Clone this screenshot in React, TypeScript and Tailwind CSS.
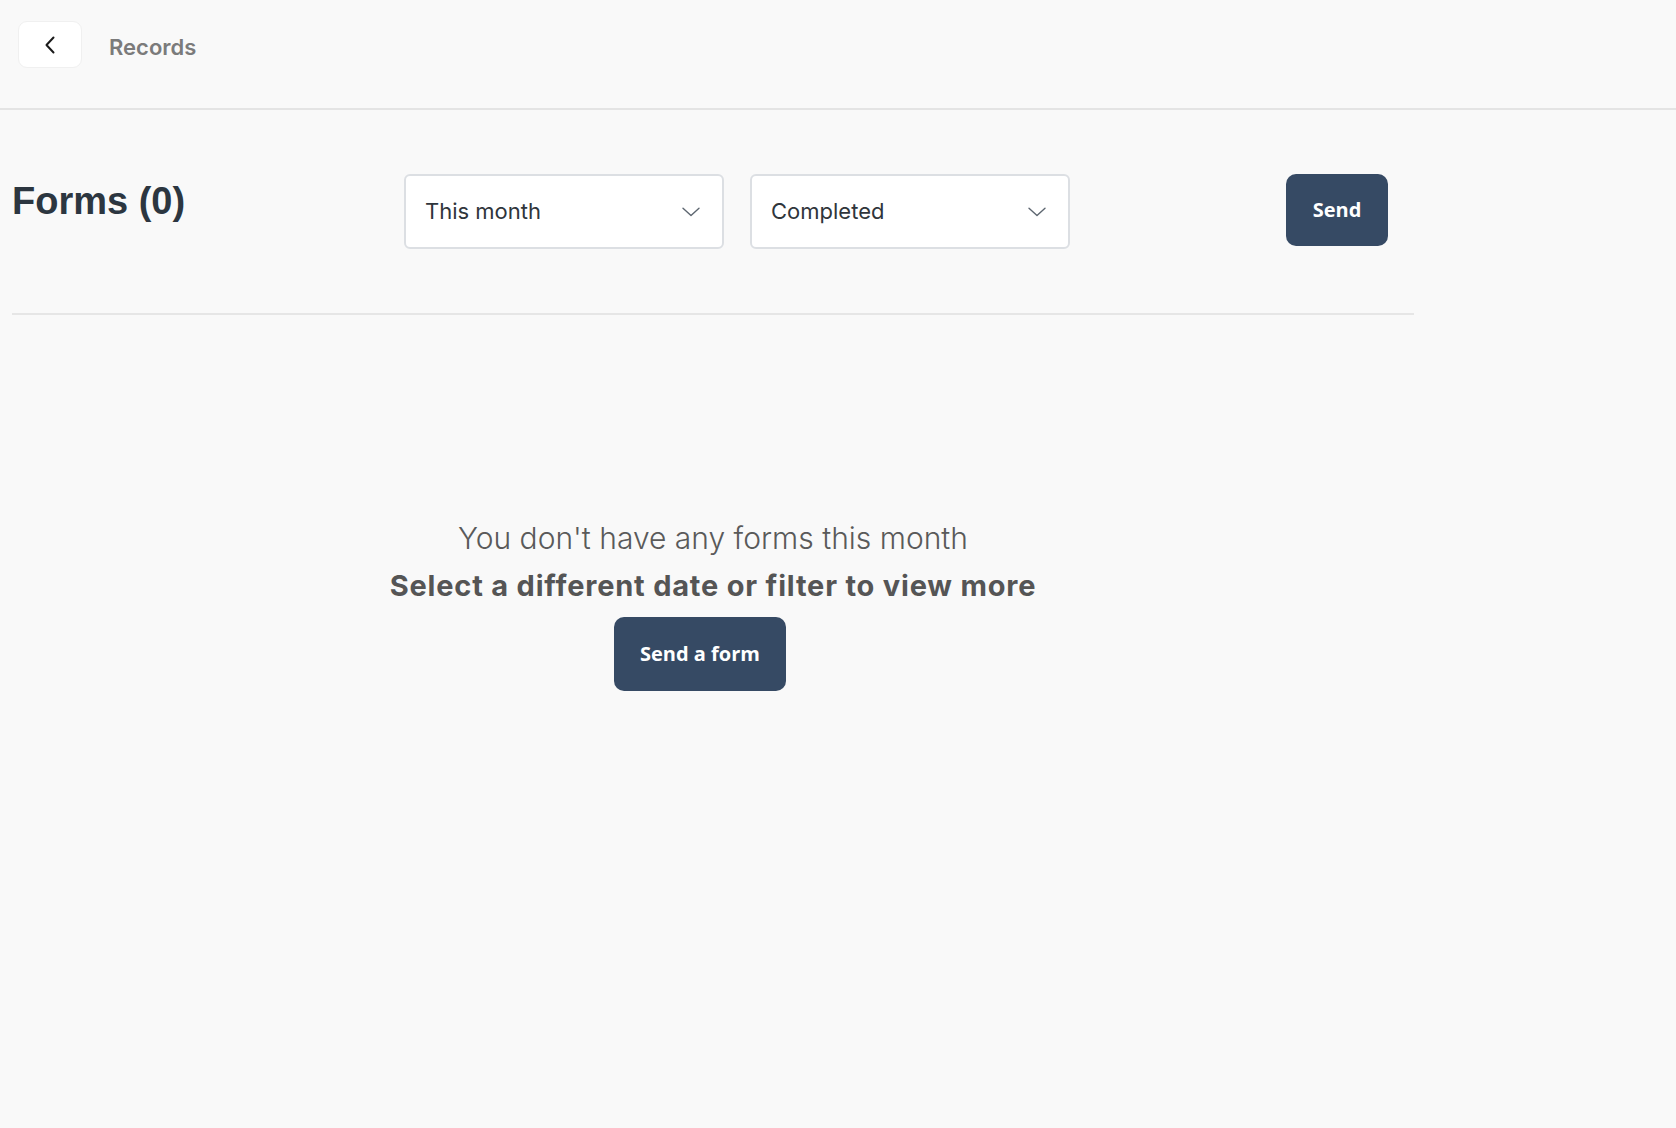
import React from "react";

function Chevron() {
  return (
    <svg width="18" height="10" viewBox="0 0 18 10" fill="none">
      <path d="M1 1.2 L9 8.6 L17 1.2" stroke="#5d6670" strokeWidth="1.4" strokeLinecap="round" strokeLinejoin="round" />
    </svg>
  );
}

function Select({ label }: { label: string }) {
  return (
    <div className="flex h-[75px] w-[320px] items-center justify-between rounded-[6px] border-2 border-[#dcdfe3] bg-white pl-[19px] pr-[22px]">
      <span className="text-[22px] text-[#2f353b]" style={{ fontFamily: "Inter, sans-serif" }}>
        {label}
      </span>
      <Chevron />
    </div>
  );
}

export default function App() {
  return (
    <div className="min-h-[1128px] w-full bg-[#f9f9f9]">
      <header className="flex h-[110px] items-start border-b-2 border-[#e4e4e4] pl-[18px] pt-[21px]">
        <button className="flex h-[47px] w-[64px] items-center justify-center rounded-[9px] border border-[#f0f0f0] bg-white">
          <svg width="12" height="18" viewBox="0 0 12 18" fill="none">
            <path d="M9.5 1.5 L2.5 9 L9.5 16.5" stroke="#1a1a1a" strokeWidth="2" strokeLinecap="round" strokeLinejoin="round" />
          </svg>
        </button>
        <span
          className="ml-[27px] mt-[10px] text-[22px] font-semibold text-[#7b7b7b]"
          style={{ fontFamily: "Inter, sans-serif" }}
        >
          Records
        </span>
      </header>

      <main className="w-[1402px] ml-[12px]">
        <div className="flex items-start border-b-2 border-[#e6e6e6] pt-[64px] pb-[64px]">
          <h1
            className="mt-[8px] w-[392px] text-[38px] font-bold leading-[38px] text-[#2c3640]"
            style={{ fontFamily: "'Liberation Sans', Arial, sans-serif" }}
          >
            Forms (0)
          </h1>
          <div className="flex gap-[26px]">
            <Select label="This month" />
            <Select label="Completed" />
          </div>
          <button
            className="ml-[216px] flex h-[72px] w-[102px] items-center justify-center rounded-[10px] bg-[#364a64] text-[20px] font-bold text-white"
            style={{ fontFamily: "'Open Sans', sans-serif" }}
          >
            Send
          </button>
        </div>

        <div className="flex flex-col items-center pt-[206px]" style={{ fontFamily: "Inter, sans-serif" }}>
          <p className="text-[30px] font-light leading-[35px] text-[#5a5a5a]">You don't have any forms this month</p>
          <p className="mt-[13px] text-[29px] font-bold leading-[34px] tracking-[0.8px] text-[#555555]">
            Select a different date or filter to view more
          </p>
          <button
            className="mr-[26px] mt-[14px] flex h-[74px] w-[172px] items-center justify-center rounded-[10px] bg-[#364a64] text-[20px] font-bold text-white"
            style={{ fontFamily: "'Open Sans', sans-serif" }}
          >
            Send a form
          </button>
        </div>
      </main>
    </div>
  );
}
